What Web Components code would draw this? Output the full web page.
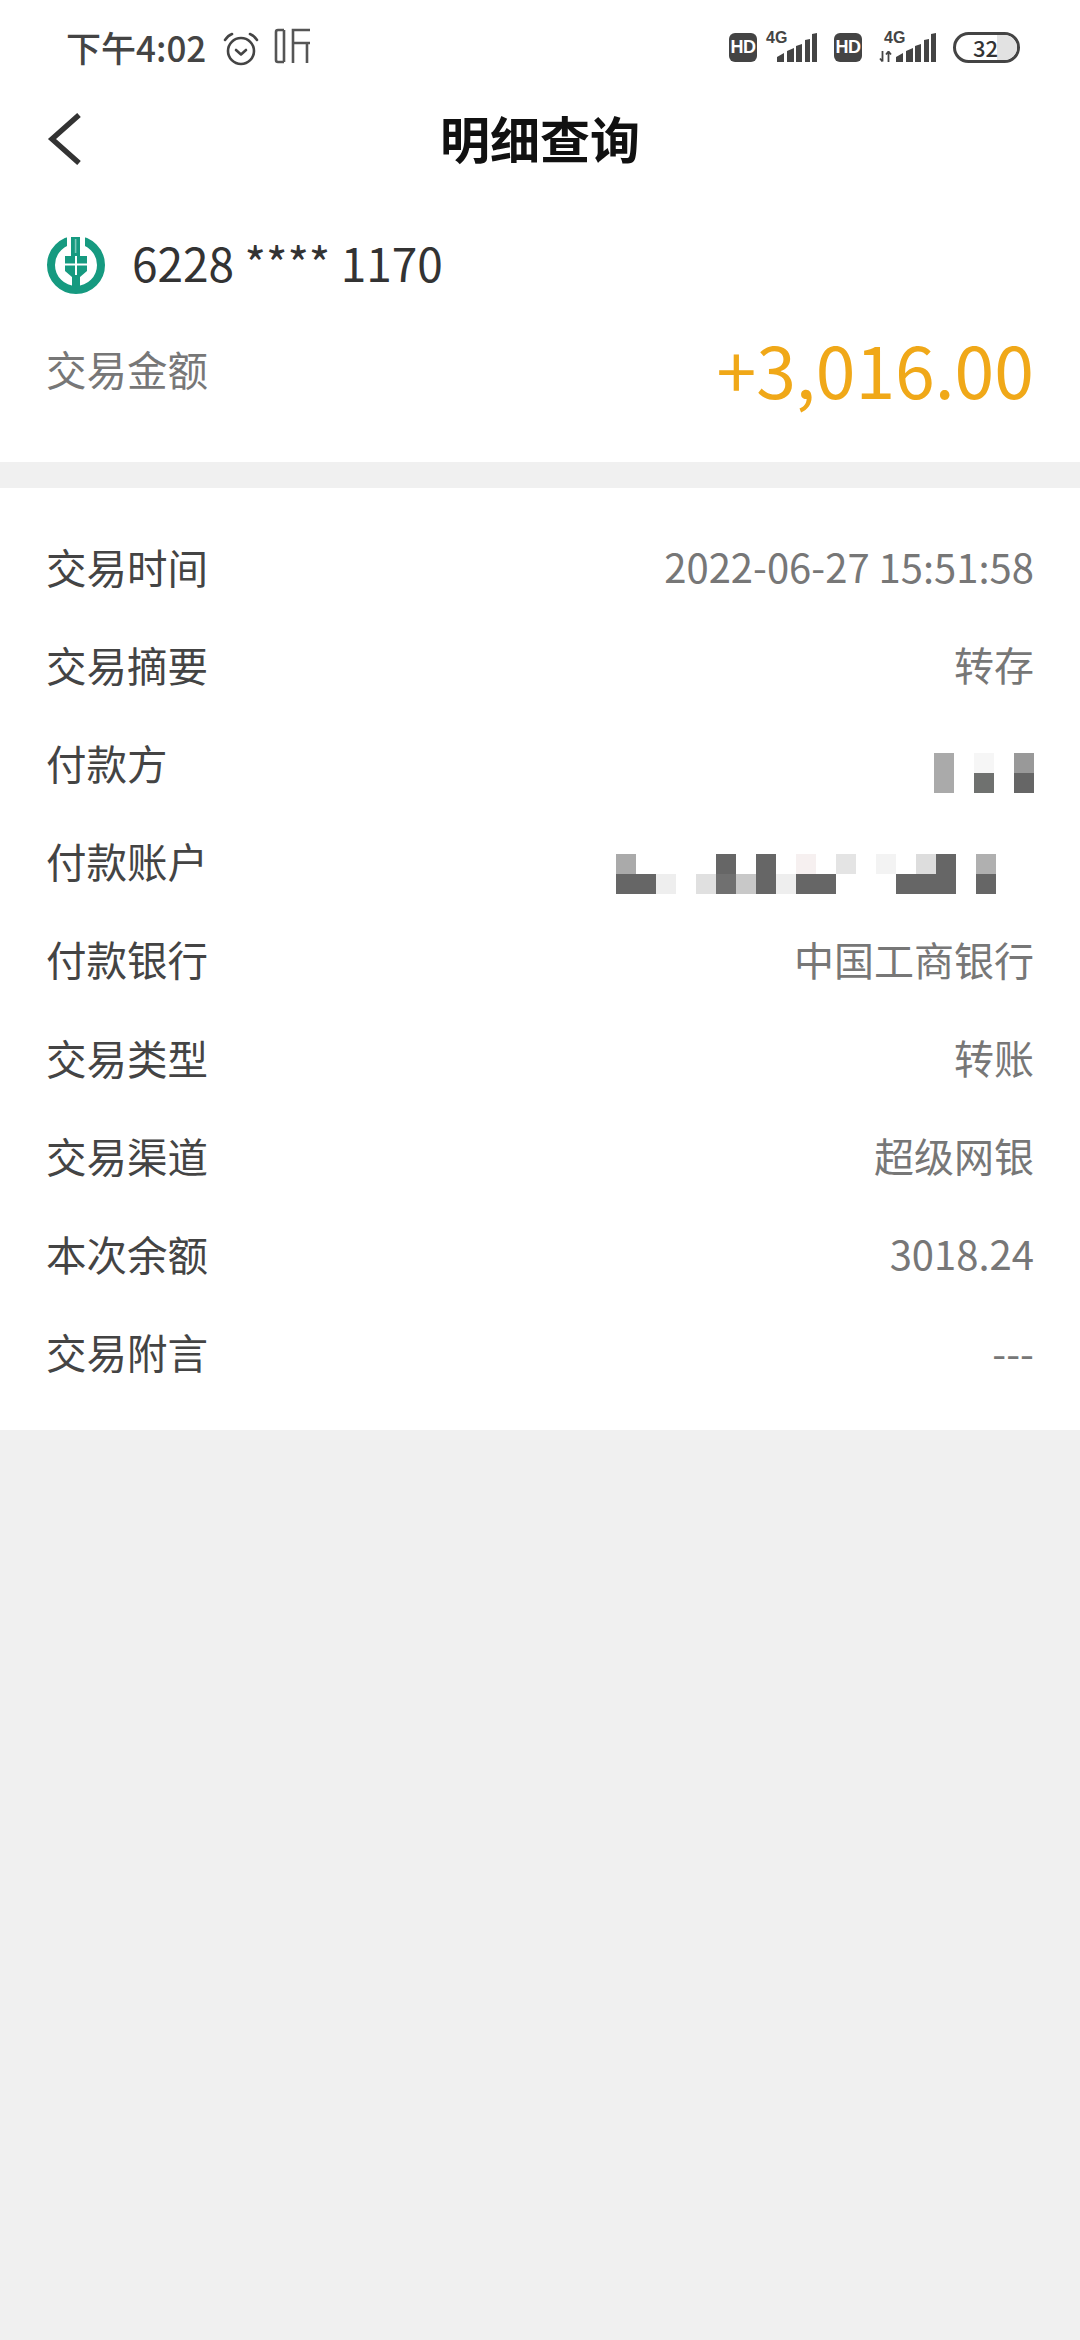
<!DOCTYPE html>
<html lang="zh">
<head>
<meta charset="utf-8">
<title>明细查询</title>
<style>
    html, body { margin: 0; padding: 0; background: #f0f0f0; }
    body { width: 1080px; min-height: 2340px; font-family: "Noto Sans CJK SC", "Noto Sans", sans-serif; }
</style>
</head>
<body>
<status-bar></status-bar>
<nav-bar>明细查询</nav-bar>
<account-summary card="6228 **** 1170" label="交易金额" amount="+3,016.00"></account-summary>
<detail-list>
    <detail-row label="交易时间">2022-06-27 15:51:58</detail-row>
    <detail-row label="交易摘要">转存</detail-row>
    <detail-row label="付款方"><mosaic-block style="margin-top:22px" cols="5" cells="aaa,,f6f6f6,,999;aaa,,6f716f,,666"></mosaic-block></detail-row>
    <detail-row label="付款账户"><mosaic-block style="margin:26px 38px 0 0" cols="19" cells="aaa,,,,,666,,666,,f6f0f0,,e4e4e4,,f3f3f3,,ddd,666,,b0b0b0;666,666,eee,,e0e0e0,707070,c8c8c8,666,eee,666,666,,,,666,666,666,,666"></mosaic-block></detail-row>
    <detail-row label="付款银行">中国工商银行</detail-row>
    <detail-row label="交易类型">转账</detail-row>
    <detail-row label="交易渠道">超级网银</detail-row>
    <detail-row label="本次余额">3018.24</detail-row>
    <detail-row label="交易附言">---</detail-row>
</detail-list>

<script>
class StatusBar extends HTMLElement {
    constructor() {
        super();
        this.attachShadow({ mode: 'open' });
        this.shadowRoot.innerHTML = `
            <style>
                :host { display: flex; height: 94px; box-sizing: border-box; padding: 0 60px 0 66px; align-items: center; justify-content: space-between; background: #fff; color: #444; }
                .left, .right { display: flex; align-items: center; }
                .time { font: 500 35px/1 "Noto Sans CJK SC", sans-serif; margin-top: -2px; }
                svg { display: block; }
            </style>
            <div class="left">
                <span class="time">下午4:02</span>
                <svg style="margin-left:17px;margin-top:3px" width="36" height="36" viewBox="0 0 36 36" fill="none" stroke="#444" stroke-width="2.6">
                    <circle cx="18" cy="20" r="13"/>
                    <path d="M13 19l5 4.5 5-4.5" stroke-linecap="round" stroke-linejoin="round"/>
                    <path d="M2 9c2-3 4-5 7-6M34 9c-2-3-4-5-7-6" stroke-linecap="round"/>
                </svg>
                <svg style="margin-left:15px;margin-top:-3px" width="37" height="36" viewBox="0 0 37 36" fill="none" stroke="#555" stroke-width="2.6">
                    <path d="M10 2H4a2 2 0 0 0-2 2v28a2 2 0 0 0 2 2h6M10 2v32"/>
                    <path d="M36 2H19v33M19 15h17M33 15v20"/>
                </svg>
            </div>
            <div class="right">
                <hd-mark></hd-mark>
                <signal-mark style="margin-left:9px"></signal-mark>
                <hd-mark style="margin-left:17px"></hd-mark>
                <signal-mark arrows style="margin-left:17px"></signal-mark>
                <battery-mark style="margin-left:17px" level="32"></battery-mark>
            </div>
        `;
    }
}

class HdMark extends HTMLElement {
    constructor() {
        super();
        this.attachShadow({ mode: 'open' });
        this.shadowRoot.innerHTML = `
            <style>
                :host { display: flex; width: 28px; height: 29px; border-radius: 6px; background: #444; color: #fff; align-items: center; justify-content: center; font: 700 18px/1 "Liberation Sans", sans-serif; letter-spacing: -0.5px; }
            </style>
            <slot>HD</slot>
        `;
    }
}

class SignalMark extends HTMLElement {
    constructor() {
        super();
        this.attachShadow({ mode: 'open' });
        const arrows = this.hasAttribute('arrows');
        this.shadowRoot.innerHTML = `
            <style>
                :host { display: block; position: relative; width: ${arrows ? 57 : 51}px; height: 32px; color: #444; }
                .net { position: absolute; top: -1px; left: ${arrows ? 5 : 0}px; font: 700 16px/1 "Liberation Sans", sans-serif; }
                svg { position: absolute; right: 0; bottom: 1px; }
            </style>
            <span class="net">4G</span>
            <svg width="40" height="29" viewBox="0 0 40 29" fill="#444">
                <path d="M0 29v-5l7-4v9zM10 29V18l7-3v14zM19 29V13l6-2v18zM28 29V7l5-1v23zM35 29V1l5-1v29z"/>
            </svg>
            ${arrows ? `<svg style="left:0;right:auto" width="13" height="11" viewBox="0 0 13 11" fill="none" stroke="#444" stroke-width="1.8"><path d="M3.500 0v10.500M1 7.500l2.500 3M9.500 11V.5M7 3.500l2.500-3 2.500 3"/></svg>` : ''}
        `;
    }
}

class BatteryMark extends HTMLElement {
    constructor() {
        super();
        this.attachShadow({ mode: 'open' });
        const level = this.getAttribute('level');
        this.shadowRoot.innerHTML = `
            <style>
                :host { display: flex; position: relative; width: 67px; height: 31px; box-sizing: border-box; border: 3px solid #444; border-radius: 16px; align-items: center; justify-content: flex-start; overflow: hidden; color: #333; font: 500 22px/1 "Noto Sans CJK SC", sans-serif; }
                .fill { position: absolute; top: 0; bottom: 0; right: 0; width: 20px; background: #e2e2e2; }
                span { position: relative; margin-left: 17px; }
            </style>
            <div class="fill"></div>
            <span>${level}</span>
        `;
    }
}

class NavBar extends HTMLElement {
    constructor() {
        super();
        this.attachShadow({ mode: 'open' });
        this.shadowRoot.innerHTML = `
            <style>
                :host { display: flex; position: relative; height: 94px; box-sizing: border-box; padding-bottom: 8px; align-items: center; justify-content: center; background: #fff; color: #111; font: 700 50px/1 "Noto Sans CJK SC", sans-serif; }
                svg { position: absolute; left: 47px; top: 19px; }
            </style>
            <svg width="34" height="52" viewBox="0 0 34 52" fill="none" stroke="#333" stroke-width="5.4"><path d="M32 2L5 26l27 24"/></svg>
            <slot></slot>
        `;
    }
}

class AccountSummary extends HTMLElement {
    constructor() {
        super();
        this.attachShadow({ mode: 'open' });
        this.shadowRoot.innerHTML = `
            <style>
                :host { display: block; box-sizing: border-box; height: 274px; padding: 44px 46px 0; background: #fff; }
                .card { display: flex; align-items: center; gap: 26px; color: #333; font-size: 46px; line-height: 60px; }
                .total { display: flex; justify-content: space-between; align-items: center; margin-top: 31px; }
                .label { color: #777; font-size: 40.500px; }
                .amount { color: #f0a818; font-size: 71.500px; line-height: 90px; }
                svg { display: block; margin: 3px 0 -3px; }
            </style>
            <div class="card">
                <svg width="60" height="60" viewBox="0 0 60 60">
                    <circle cx="30" cy="30" r="25" fill="none" stroke="#169a80" stroke-width="8"/>
                    <path fill="#fff" d="M21 0h18v21H21z"/>
                    <path fill="#169a80" d="M25 2h9v19h-9z"/>
                    <path fill="#7cc9b8" d="M28.800 4h1.600v14h-1.600z"/>
                    <path fill="#169a80" d="M19 21h22v15l-7 6v16h-8V42l-7-6z"/>
                    <path fill="#fff" d="M19 28.500h22v2H19zM29 21h2v19h-2z"/>
                </svg>
                <span>${this.getAttribute('card')}</span>
            </div>
            <div class="total">
                <span class="label">${this.getAttribute('label')}</span>
                <span class="amount">${this.getAttribute('amount')}</span>
            </div>
        `;
    }
}

class DetailList extends HTMLElement {
    constructor() {
        super();
        this.attachShadow({ mode: 'open' });
        this.shadowRoot.innerHTML = `
            <style>
                :host { display: block; margin-top: 26px; padding: 29px 46px 29px; background: #fff; }
            </style>
            <slot></slot>
        `;
    }
}

class DetailRow extends HTMLElement {
    constructor() {
        super();
        this.attachShadow({ mode: 'open' });
        this.shadowRoot.innerHTML = `
            <style>
                :host { display: flex; height: 98.200px; align-items: center; justify-content: space-between; font-size: 40px; }
                .label { color: #444; font-size: 40.500px; }
                .value { color: #777; display: flex; justify-content: flex-end; }
            </style>
            <span class="label">${this.getAttribute('label')}</span>
            <span class="value"><slot></slot></span>
        `;
    }
}

// the blurred names in the screenshot: one string of rows, comma separated cells
class MosaicBlock extends HTMLElement {
    constructor() {
        super();
        this.attachShadow({ mode: 'open' });
        const cols = parseInt(this.getAttribute('cols'));
        const cells = this.getAttribute('cells').split(';').map(row => row.split(',').map(c =>
            `<i style="background:${c ? '#' + c : 'transparent'}"></i>`).join('')).join('');
        this.shadowRoot.innerHTML = `
            <style>
                :host { display: grid; grid-template-columns: repeat(${cols}, 20px); grid-auto-rows: 20px; }
            </style>
            ${cells}
        `;
    }
}

customElements.define('hd-mark', HdMark);
customElements.define('signal-mark', SignalMark);
customElements.define('battery-mark', BatteryMark);
customElements.define('status-bar', StatusBar);
customElements.define('nav-bar', NavBar);
customElements.define('account-summary', AccountSummary);
customElements.define('detail-list', DetailList);
customElements.define('detail-row', DetailRow);
customElements.define('mosaic-block', MosaicBlock);
</script>
</body>
</html>
